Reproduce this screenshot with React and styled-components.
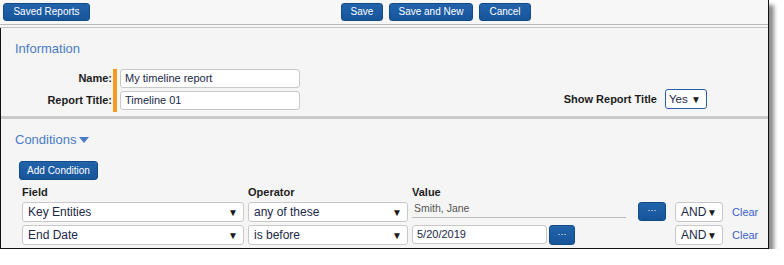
import React from "react";
import styled, { createGlobalStyle } from "styled-components";

const GlobalStyle = createGlobalStyle`
  html, body {
    margin: 0;
    padding: 0;
    background: #ffffff;
    font-family: "Liberation Sans", Arial, sans-serif;
  }
`;

const StyledFrame = styled.div`
  width: 768px;
  height: 248px;
  background: #f5f5f5;
  border-right: 1px solid #111;
  border-bottom: 1px solid #111;
  box-shadow: 5px 5px 4px rgba(0, 0, 0, 0.45);
  display: flex;
  flex-direction: column;
  overflow: hidden;
`;

const StyledToolbar = styled.div`
  height: 25px;
  padding: 3px 0 0 3px;
  box-sizing: border-box;
  display: flex;
  align-items: flex-start;
  background: #f7f7f7;
  border-bottom: 1px solid #b8b8b8;
`;

const StyledToolbarGroup = styled.div`
  display: flex;
  gap: 6px;
  margin-left: 251px;
`;

const StyledButton = styled.button`
  width: ${(p) => p.$w}px;
  height: ${(p) => p.$h || 18}px;
  padding: 0;
  flex-shrink: 0;
  background: linear-gradient(#2263ab, #17559a);
  border: 1px solid #124a88;
  border-radius: 3px;
  color: #fff;
  font-family: "Liberation Sans", Arial, sans-serif;
  font-size: 10px;
  line-height: 1;
  white-space: nowrap;
  display: flex;
  align-items: center;
  justify-content: center;
  cursor: pointer;
  box-sizing: border-box;
`;

const StyledThinGap = styled.div`
  height: 2px;
  background: #f7f7f7;
  border-bottom: 1px solid #c4c4c4;
`;

const StyledBody = styled.div`
  flex: 1;
  border-left: 1px solid #111;
  display: flex;
  flex-direction: column;
`;

const StyledSection = styled.div`
  padding: 12px 0 0 14px;
  display: flex;
  flex-direction: column;
  height: ${(p) => (p.$h ? `${p.$h}px` : "auto")};
  box-sizing: border-box;
`;

const StyledSectionTitle = styled.div`
  color: #4a7cc4;
  font-size: 13px;
  line-height: 15px;
  margin-top: 1px;
  display: flex;
  align-items: center;
  gap: 3px;
`;

const StyledInfoBody = styled.div`
  display: flex;
  align-items: flex-end;
  justify-content: space-between;
  margin-top: 13px;
  padding-right: 61px;
`;

const StyledFormGrid = styled.div`
  display: grid;
  grid-template-columns: 98px 4px 180px;
  grid-template-rows: 22px 22px;
`;

const StyledLabel = styled.label`
  font-size: 11px;
  font-weight: 700;
  color: #1c1c1c;
  text-align: right;
  padding-right: 1px;
  line-height: 19px;
`;

const StyledRequiredBar = styled.div`
  grid-column: 2;
  grid-row: 1 / 3;
  background: #f29a1f;
  height: 43px;
`;

const StyledTextInput = styled.div`
  grid-column: 3;
  margin-left: ${(p) => (p.$flush ? 0 : 3)}px;
  width: ${(p) => p.$w || 180}px;
  height: 19px;
  box-sizing: border-box;
  background: #fff;
  border: 1px solid #c8c8c8;
  border-radius: 3px;
  padding-left: 4px;
  font-size: 11px;
  line-height: 17px;
  color: #1b2848;
`;

const StyledInlineField = styled.div`
  display: flex;
  align-items: center;
  gap: 8px;
  margin-bottom: 4px;
`;

const StyledPlainLabel = styled.span`
  font-size: 11px;
  font-weight: 700;
  color: #1c1c1c;
`;

const StyledSelect = styled.div`
  width: ${(p) => p.$w}px;
  height: ${(p) => p.$h || 20}px;
  box-sizing: border-box;
  background: #fff;
  border: 1px solid ${(p) => (p.$accent ? "#2a5fa8" : "#c8c8c8")};
  border-radius: 3px;
  padding: 0 5px 0 ${(p) => p.$pl || 5}px;
  display: flex;
  align-items: center;
  justify-content: space-between;
  font-size: ${(p) => p.$fs || 12}px;
  color: #1b2848;
`;

const StyledArrow = styled.span`
  font-size: 10px;
  color: #1a1a1a;
`;

const StyledDivider = styled.div`
  height: 3px;
  background: #c9c9c9;
`;

const StyledAddRow = styled.div`
  margin: 14px 0 0 4px;
`;

const StyledConditionGrid = styled.div`
  display: grid;
  grid-template-columns: 226px 164px 263px 57px auto;
  grid-template-rows: 14px 20px 20px;
  row-gap: 3px;
  margin-top: 5px;
  margin-left: 7px;
  align-items: start;
`;

const StyledHeader = styled.div`
  font-size: 11px;
  font-weight: 700;
  color: #1c1c1c;
  line-height: 13px;
  padding-top: 1px;
`;

const StyledValueCell = styled.div`
  display: flex;
  align-items: flex-start;
  gap: ${(p) => p.$gap || 2}px;
`;

const StyledValueText = styled.div`
  width: 214px;
  height: 16px;
  border-bottom: 1px solid #bdbdbd;
  font-size: 10.5px;
  color: #555;
  padding-left: 2px;
  line-height: 12px;
  box-sizing: border-box;
`;

const StyledDots = styled.span`
  font-size: 9px;
  margin-top: -2px;
`;

const StyledClear = styled.a`
  color: #3c62c8;
  font-size: 11px;
  line-height: 20px;
  cursor: pointer;
`;

const Caret = () => (
  <svg width="10" height="6" viewBox="0 0 10 6">
    <path d="M0 0 L10 0 L5 6 Z" fill="#4a7cc4" />
  </svg>
);

const rows = [
  { field: "Key Entities", op: "any of these", value: "Smith, Jane", kind: "list" },
  { field: "End Date", op: "is before", value: "5/20/2019", kind: "date" },
];

const App = () => (
  <>
    <GlobalStyle />
    <StyledFrame>
      <StyledToolbar>
        <StyledButton $w={87}>Saved Reports</StyledButton>
        <StyledToolbarGroup>
          <StyledButton $w={42}>Save</StyledButton>
          <StyledButton $w={84}>Save and New</StyledButton>
          <StyledButton $w={52}>Cancel</StyledButton>
        </StyledToolbarGroup>
      </StyledToolbar>
      <StyledThinGap />
      <StyledBody>
        <StyledSection $h={88}>
          <StyledSectionTitle>Information</StyledSectionTitle>
          <StyledInfoBody>
            <StyledFormGrid>
              <StyledLabel>Name:</StyledLabel>
              <StyledRequiredBar />
              <StyledTextInput>My timeline report</StyledTextInput>
              <StyledLabel>Report Title:</StyledLabel>
              <StyledTextInput>Timeline 01</StyledTextInput>
            </StyledFormGrid>
            <StyledInlineField>
              <StyledPlainLabel>Show Report Title</StyledPlainLabel>
              <StyledSelect $w={42} $accent $pl={3} $fs={11.5}>
                Yes <StyledArrow>▼</StyledArrow>
              </StyledSelect>
            </StyledInlineField>
          </StyledInfoBody>
        </StyledSection>
        <StyledDivider />
        <StyledSection>
          <StyledSectionTitle>
            Conditions <Caret />
          </StyledSectionTitle>
          <StyledAddRow>
            <StyledButton $w={79} $h={19}>Add Condition</StyledButton>
          </StyledAddRow>
          <StyledConditionGrid>
            <StyledHeader>Field</StyledHeader>
            <StyledHeader>Operator</StyledHeader>
            <StyledHeader>Value</StyledHeader>
            <div />
            <div />
            {rows.map((r) => (
              <React.Fragment key={r.field}>
                <StyledSelect $w={222}>
                  {r.field} <StyledArrow>▼</StyledArrow>
                </StyledSelect>
                <StyledSelect $w={160}>
                  {r.op} <StyledArrow>▼</StyledArrow>
                </StyledSelect>
                {r.kind === "list" ? (
                  <StyledValueCell $gap={12}>
                    <StyledValueText>{r.value}</StyledValueText>
                    <StyledButton $w={28} $h={19}>
                      <StyledDots>···</StyledDots>
                    </StyledButton>
                  </StyledValueCell>
                ) : (
                  <StyledValueCell>
                    <StyledTextInput $w={135} $flush>
                      {r.value}
                    </StyledTextInput>
                    <StyledButton $w={26} $h={20}>
                      <StyledDots>···</StyledDots>
                    </StyledButton>
                  </StyledValueCell>
                )}
                <StyledSelect $w={48}>
                  AND <StyledArrow>▼</StyledArrow>
                </StyledSelect>
                <StyledClear>Clear</StyledClear>
              </React.Fragment>
            ))}
          </StyledConditionGrid>
        </StyledSection>
      </StyledBody>
    </StyledFrame>
  </>
);

export default App;
